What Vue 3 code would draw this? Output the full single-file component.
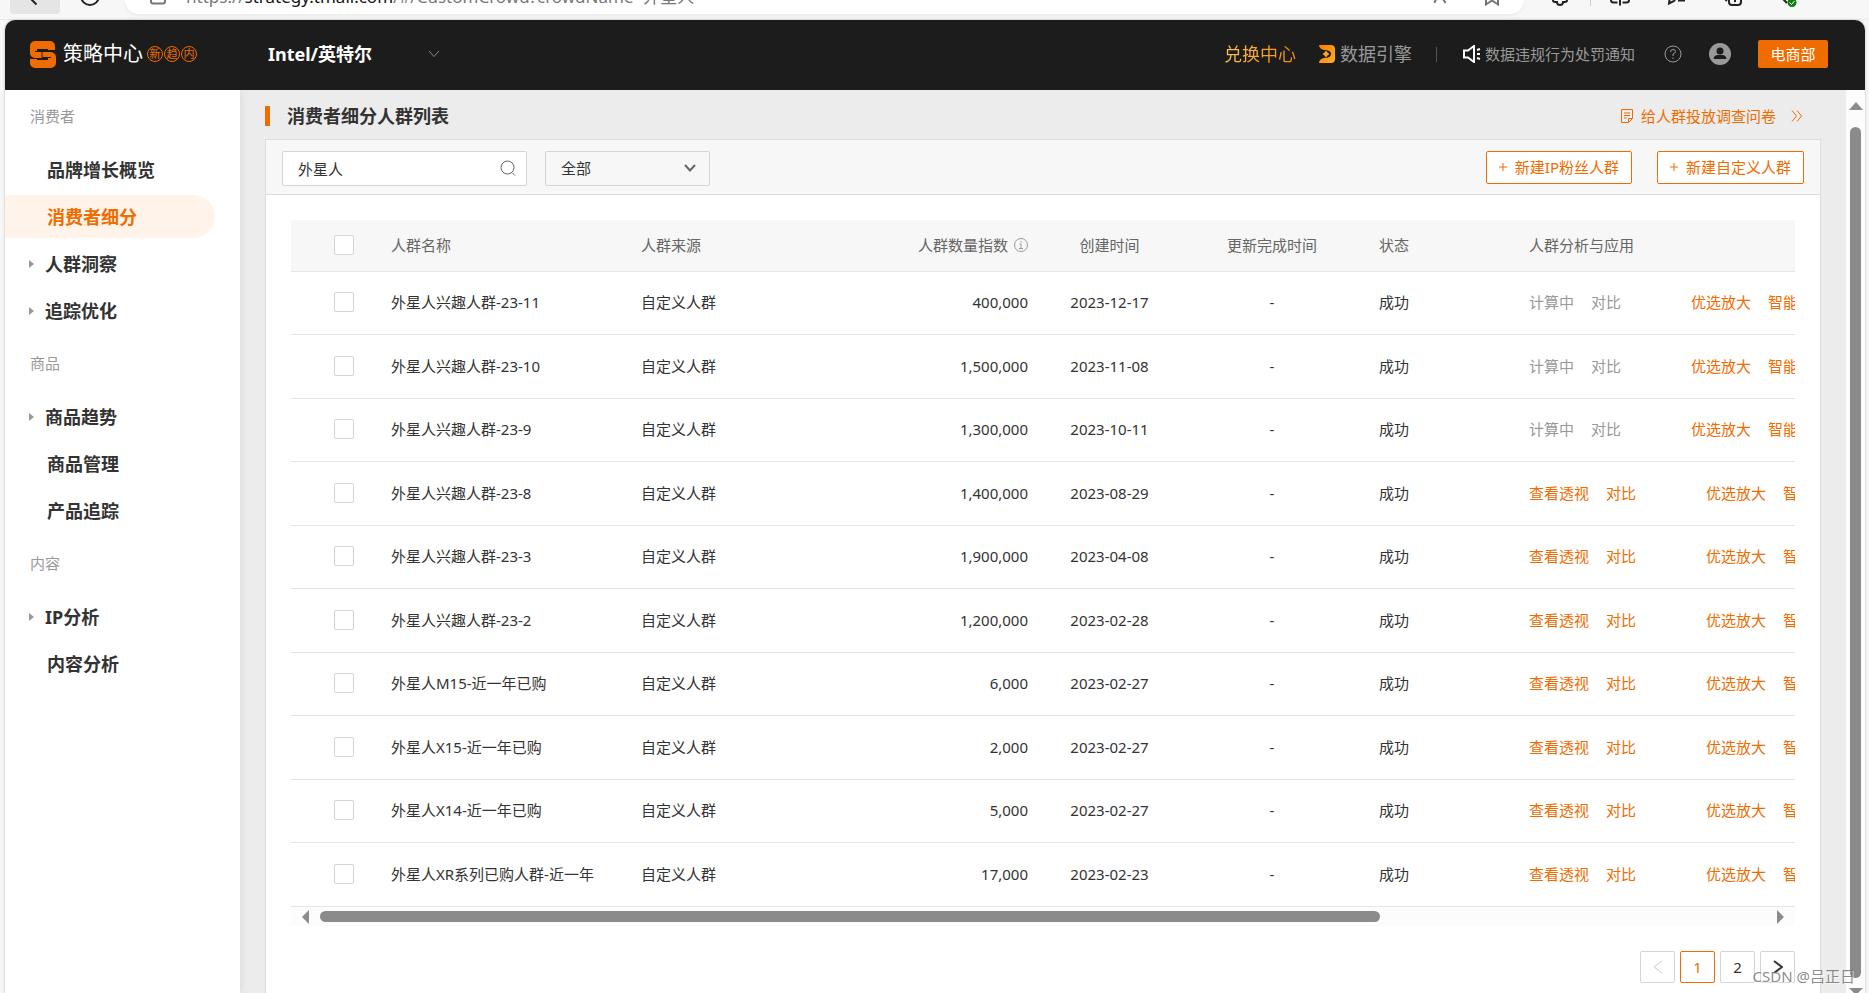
<script setup>
import { ref } from 'vue'

const keyword = ref('外星人')
const source = ref('全部')
const url = { scheme: 'https://', host: 'strategy.tmall.com', path: '/#/CustomCrowd?crowdName=外星人' }

const menu = [
  {
    title: '消费者',
    items: [
      { text: '品牌增长概览' },
      { text: '消费者细分', active: true },
      { text: '人群洞察', group: true },
      { text: '追踪优化', group: true },
    ],
  },
  {
    title: '商品',
    items: [{ text: '商品趋势', group: true }, { text: '商品管理' }, { text: '产品追踪' }],
  },
  {
    title: '内容',
    items: [{ text: 'IP分析', group: true }, { text: '内容分析' }],
  },
]

const rows = [
  { name: '外星人兴趣人群-23-11', count: '400,000', date: '2023-12-17', pending: true },
  { name: '外星人兴趣人群-23-10', count: '1,500,000', date: '2023-11-08', pending: true },
  { name: '外星人兴趣人群-23-9', count: '1,300,000', date: '2023-10-11', pending: true },
  { name: '外星人兴趣人群-23-8', count: '1,400,000', date: '2023-08-29' },
  { name: '外星人兴趣人群-23-3', count: '1,900,000', date: '2023-04-08' },
  { name: '外星人兴趣人群-23-2', count: '1,200,000', date: '2023-02-28' },
  { name: '外星人M15-近一年已购', count: '6,000', date: '2023-02-27' },
  { name: '外星人X15-近一年已购', count: '2,000', date: '2023-02-27' },
  { name: '外星人X14-近一年已购', count: '5,000', date: '2023-02-27' },
  { name: '外星人XR系列已购人群-近一年', count: '17,000', date: '2023-02-23' },
]
</script>

<template>
  <div class="shell">
    <div class="browser">
      <button class="nav back" aria-label="后退">
        <svg width="20" height="20" viewBox="0 0 20 20"><path d="M13-4 6 -1 11.500 4.500" /></svg>
      </button>
      <button class="nav" aria-label="刷新">
        <svg width="20" height="20" viewBox="0 0 20 20"><circle cx="10" cy="-4" r="9" /></svg>
      </button>
      <div class="address">
        <svg class="lock" width="16" height="20" viewBox="0 0 16 20"><rect x="1" y="-8" width="14" height="11.500" rx="2" /></svg>
        <div class="url"><span>{{ url.scheme }}</span><b>{{ url.host }}</b><span>{{ url.path }}</span></div>
        <svg class="soft" width="20" height="20" viewBox="0 0 20 20"><path d="M8-6 4.500 3M10-6 15.500 3" /></svg>
        <svg class="soft" width="20" height="20" viewBox="0 0 20 20"><path d="M4-6V4.500L10 0.500 16 4.500V-6" /></svg>
      </div>
      <div class="tools">
        <button class="nav puzzle" aria-label="扩展">
          <svg width="20" height="20" viewBox="0 0 20 20"><path d="M3-5V0Q3 2 5 2H7Q7 5 10 5 13 5 13 2H15Q17 2 17 0V-5" /></svg>
        </button>
        <i class="bar"></i>
        <button class="nav tool" aria-label="分屏">
          <svg width="20" height="20" viewBox="0 0 20 20"><path d="M1-5V0Q1 2.500 3.500 2.500H7.500M12.500 2.500H16.500Q19 2.500 19 0V-5M10-5V5.500" /></svg>
        </button>
        <button class="nav tool" aria-label="收藏夹">
          <svg width="20" height="20" viewBox="0 0 20 20"><path d="M3-4 2 3.500 7 1 9-2M11 .5H18" /></svg>
        </button>
        <button class="nav tool" aria-label="集锦">
          <svg width="20" height="20" viewBox="0 0 20 20"><path d="M5-5V2Q5 5 8 5H14Q17 5 17 2V-5M1-1 3 1M11-5V2" /></svg>
        </button>
        <button class="nav tool" aria-label="浏览器概要">
          <svg width="20" height="20" viewBox="0 0 20 20"><path d="M1-2 6 3" /><circle class="ok" cx="11" cy="2.500" r="4.500" /><path class="tick" d="M8.500 2.500 10.500 4.500 13.500 1" /></svg>
        </button>
      </div>
    </div>

    <div class="window">
      <header class="top">
        <svg class="logo" width="26" height="27" viewBox="0 0 26 27">
          <path d="M5 0H20A5 5 0 0 1 25 5V9H18V6H7V11H20A6 5 0 0 1 26 16V22A5 5 0 0 1 21 27H5A5 5 0 0 1 0 22V18H7V20H18V17H5A5 5 0 0 1 0 12V5A5 5 0 0 1 5 0Z" />
          <path d="M7 5H18V8H7ZM7 19H18V22H7Z" />
          <path class="cut" d="M5 10.500H17M12 11V16.500H21" />
        </svg>
        <span class="product">策略中心</span>
        <span class="seals"><i>新</i><i>趋</i><i>内</i></span>
        <button class="brand">
          <span>Intel/英特尔</span>
          <svg width="12" height="8" viewBox="0 0 12 8"><path d="M1 1 6 6.500 11 1" /></svg>
        </button>
        <nav class="links">
          <a class="exchange" href="#exchange">兑换中心</a>
          <a class="engine" href="#engine">
            <svg width="16" height="18" viewBox="0 0 16 18">
              <defs>
                <linearGradient id="engine" x1="0" y1="0" x2="1" y2="1"><stop offset="0" stop-color="#ff7a00" /><stop offset="1" stop-color="#ffb020" /></linearGradient>
              </defs>
              <path fill="url(#engine)" d="M0 0H12Q16 0 16 4V14Q16 18 12 18H0Q0 14 5 13 12 13 12 9 12 5 5 5 0 4 0 0Z" />
              <path fill="#ffa51f" d="M7 5.500 8.500 7.500 10.500 9 8.500 10.500 7 12.500 5.500 10.500 3.500 9 5.500 7.500Z" />
            </svg>
            数据引擎
          </a>
          <i class="split"></i>
          <a class="notice" href="#notice">
            <svg width="18" height="18" viewBox="0 0 18 18"><path d="M11 1V17L5 12.500H1V5.500H5ZM14 5 17 4M14 9H17M14 13 17 14" /></svg>
            数据违规行为处罚通知
          </a>
          <button class="round" aria-label="帮助">
            <svg width="18" height="18" viewBox="0 0 18 18"><circle cx="9" cy="9" r="8" /><path d="M6.500 7Q6.500 4.500 9 4.500 11.500 4.500 11.500 6.500 11.500 8 9 9V11M9 12.500V14" /></svg>
          </button>
          <button class="round user" aria-label="账户">
            <svg width="22" height="22" viewBox="0 0 22 22"><circle class="disc" cx="11" cy="11" r="11" /><circle class="hole" cx="11" cy="8" r="3.500" /><path class="hole" d="M4.500 16Q5 12 9 12H13Q17 12 17.500 16Z" /></svg>
          </button>
          <button class="dept">电商部</button>
        </nav>
      </header>

      <div class="body">
        <aside class="side">
          <section v-for="g in menu" :key="g.title" class="group">
            <h2>{{ g.title }}</h2>
            <a v-for="m in g.items" :key="m.text" href="#menu" :class="{ active: m.active, parent: m.group }">
              <svg v-if="m.group" width="5" height="8" viewBox="0 0 5 8"><path d="M0 0 5 4 0 8Z" /></svg>
              {{ m.text }}
            </a>
          </section>
        </aside>

        <main class="main">
          <div class="heading">
            <h1>消费者细分人群列表</h1>
            <a href="#survey">
              <svg width="12" height="14" viewBox="0 0 12 14"><path d="M7.500 13.500H.5V.5H11.500V9.500ZM7.500 13.500V9.500H11.500M3 4H9M3 6.500H9M3 9H5.500" /></svg>
              <span>给人群投放调查问卷</span>
              <svg width="12" height="12" viewBox="0 0 12 12"><path d="M1 .5 5.500 6 1 11.500M6 .5 10.500 6 6 11.500" /></svg>
            </a>
          </div>

          <section class="card">
            <div class="filters">
              <label class="search">
                <input v-model="keyword" type="text" aria-label="人群名称" />
                <svg width="16" height="16" viewBox="0 0 16 16"><circle cx="7.500" cy="7.500" r="6.500" /><path d="M12.500 13 15 15.500" /></svg>
              </label>
              <label class="pick">
                <select v-model="source" aria-label="人群来源"><option>全部</option></select>
                <svg width="12" height="8" viewBox="0 0 12 8"><path d="M1 1 6 6.500 11 1" /></svg>
              </label>
              <div class="actions">
                <button>
                  <svg width="8" height="8" viewBox="0 0 8 8"><path d="M4 0V8M0 4H8" /></svg>新建IP粉丝人群
                </button>
                <button>
                  <svg width="8" height="8" viewBox="0 0 8 8"><path d="M4 0V8M0 4H8" /></svg>新建自定义人群
                </button>
              </div>
            </div>

            <div class="list">
              <div class="viewport">
                <table>
                  <colgroup>
                    <col class="w-check" /><col class="w-name" /><col class="w-source" /><col class="w-count" />
                    <col class="w-date" /><col class="w-update" /><col class="w-status" /><col />
                  </colgroup>
                  <thead>
                    <tr>
                      <th class="check"><input type="checkbox" aria-label="全选" /></th>
                      <th>人群名称</th>
                      <th>人群来源</th>
                      <th class="num">
                        <span class="hint">人群数量指数
                          <svg width="14" height="14" viewBox="0 0 14 14"><circle cx="7" cy="7" r="6.500" /><path d="M7 3V4.500M5.500 6H7V10.500M5 10.500H9" /></svg>
                        </span>
                      </th>
                      <th class="mid">创建时间</th>
                      <th class="mid">更新完成时间</th>
                      <th class="status">状态</th>
                      <th>人群分析与应用</th>
                    </tr>
                  </thead>
                  <tbody>
                    <tr v-for="r in rows" :key="r.name">
                      <td class="check"><input type="checkbox" :aria-label="r.name" /></td>
                      <td>{{ r.name }}</td>
                      <td>自定义人群</td>
                      <td class="num">{{ r.count }}</td>
                      <td class="mid">{{ r.date }}</td>
                      <td class="mid">-</td>
                      <td class="status">成功</td>
                      <td>
                        <div class="ops">
                          <template v-if="r.pending">
                            <button disabled>计算中</button>
                            <button disabled>对比</button>
                          </template>
                          <template v-else>
                            <a href="#view">查看透视</a>
                            <a href="#compare">对比</a>
                          </template>
                          <a class="far" href="#expand">优选放大</a>
                          <a href="#smart">智能放大</a>
                        </div>
                      </td>
                    </tr>
                  </tbody>
                </table>
              </div>
              <div class="hscroll">
                <svg width="7" height="14" viewBox="0 0 7 14"><path d="M7 0V14L0 7Z" /></svg>
                <div class="rail"><div class="thumb"></div></div>
                <svg width="7" height="14" viewBox="0 0 7 14"><path d="M0 0V14L7 7Z" /></svg>
              </div>
              <nav class="pages" aria-label="分页">
                <button disabled aria-label="上一页"><svg width="10" height="14" viewBox="0 0 10 14"><path d="M9 1 1 7 9 13" /></svg></button>
                <button class="current">1</button>
                <button>2</button>
                <button class="next" aria-label="下一页"><svg width="10" height="14" viewBox="0 0 10 14"><path d="M1 1 9 7 1 13" /></svg></button>
              </nav>
            </div>
          </section>
        </main>

        <div class="vscroll">
          <svg width="14" height="8" viewBox="0 0 14 8"><path d="M7 0 14 8H0Z" /></svg>
          <div class="thumb"></div>
          <svg class="down" width="14" height="5" viewBox="0 0 14 5"><path d="M0 0H14L9 5H5Z" /></svg>
        </div>
      </div>
    </div>
    <div class="mark">CSDN @吕正日</div>
  </div>
</template>

<style>
body {
  background: #f7f7f7;
  overflow: hidden;
}
</style>

<style scoped>
* {
  box-sizing: border-box;
}
.shell {
  position: relative;
  display: flex;
  flex-direction: column;
  height: 100vh;
  overflow: hidden;
  font: 15px/20px "Noto Sans", "Noto Sans CJK SC", sans-serif;
  color: #333;
}
button,
input,
select {
  font: inherit;
  color: inherit;
  margin: 0;
  padding: 0;
  border: 0;
  background: none;
}
a {
  color: #ef6c00;
  text-decoration: none;
}
i {
  font-style: normal;
}
svg {
  display: block;
  flex: none;
  fill: none;
  stroke: currentColor;
}

/* browser toolbar */
.browser {
  display: flex;
  flex: none;
  height: 20px;
  overflow: hidden;
  border-bottom: 1px solid #ebebeb;
  color: #222;
}
.nav {
  display: flex;
  justify-content: center;
  height: 14px;
  width: 50px;
}
.nav svg,
.lock,
.soft {
  overflow: hidden;
  stroke-width: 2;
}
.nav:nth-child(2) {
  margin: 0 15px 0 5px;
}
.nav.back {
  margin-left: 10px;
  background: #e5e5e5;
  border-radius: 0 0 4px 4px;
}
.address {
  display: flex;
  flex: 1;
  height: 14px;
  margin-left: -5px;
  padding: 0 22px 0 25px;
  background: #fff;
  border-radius: 0 0 20px 20px;
  box-shadow: 0 2px 3px #ececec;
}
.lock,
.soft {
  color: #777;
}
.soft + .soft {
  margin-left: 32px;
}
.url {
  flex: 1;
  height: 7px;
  margin-left: 20px;
  display: flex;
  align-items: flex-end;
  overflow: hidden;
  font-size: 17px;
  line-height: 20px;
  color: #777;
  white-space: nowrap;
}
.url b {
  font-weight: 400;
  color: #111;
}
.tools {
  display: flex;
  width: 345px;
}
.nav.puzzle {
  width: 40px;
  margin-left: 16px;
}
.bar {
  width: 1px;
  height: 6px;
  margin-left: 10px;
  background: #ccc;
}
.nav.tool {
  width: 57px;
  margin: 0;
}
.ok {
  fill: #107c10;
  stroke: none;
}
.tick {
  stroke: #fff;
  stroke-width: 1;
}

/* page */
.window {
  display: flex;
  flex-direction: column;
  flex: 1;
  min-height: 0;
  margin: 0 4px 0 5px;
  border-radius: 10px 10px 0 0;
  overflow: hidden;
  box-shadow: 0 0 3px #bbb;
}
.top {
  position: relative;
  z-index: 1;
  display: flex;
  align-items: center;
  flex: none;
  height: 70px;
  padding: 0 37px 2px 25px;
  background: #1c1c1c;
  color: #999;
  white-space: nowrap;
}
.logo {
  fill: #ef6c00;
  stroke: none;
}
.logo .cut {
  fill: none;
  stroke: #1c1c1c;
  stroke-width: 1;
}
.product {
  margin-left: 7px;
  font-size: 20px;
  line-height: 28px;
  color: #fff;
}
.seals {
  display: flex;
  gap: 1px;
  margin-left: 4px;
}
.seals i {
  width: 16px;
  height: 16px;
  border: 1px solid #ef6c00;
  border-radius: 50%;
  color: #ef6c00;
  font-size: 11px;
  line-height: 14px;
  display: flex;
  justify-content: center;
}
.brand {
  display: flex;
  align-items: center;
  justify-content: space-between;
  width: 172px;
  margin-left: 71px;
  font-size: 18px;
  font-weight: 700;
  color: #fff;
}
.brand svg {
  color: #888;
}
.links {
  display: flex;
  align-items: center;
  margin-left: auto;
}
.links a {
  display: flex;
  align-items: center;
  gap: 5px;
  color: #999;
}
.links .exchange {
  font-size: 18px;
  background: linear-gradient(90deg, #f9c15c, #f78a00);
  background-clip: text;
  color: transparent;
}
.links .engine {
  margin-left: 23px;
  font-size: 18px;
}
.engine svg {
  stroke: none;
}
.split {
  width: 1px;
  height: 15px;
  margin: 0 26px 0 24px;
  background: #555;
}
.links .notice {
  gap: 4px;
}
.notice svg {
  color: #fff;
  stroke-width: 2;
}
.round {
  margin-left: 29px;
}
.round svg {
  stroke-width: 1;
}
.round.user {
  margin-left: 27px;
}
.disc {
  fill: #999;
  stroke: none;
}
.hole {
  fill: #1c1c1c;
  stroke: none;
}
.dept {
  width: 70px;
  height: 28px;
  margin-left: 27px;
  border-radius: 2px;
  background: #ef6c00;
  color: #fff;
}
.body {
  display: flex;
  flex: 1;
  min-height: 0;
  background: #ececec;
}

/* side menu */
.side {
  flex: none;
  width: 235px;
  padding-top: 15px;
  background: #fff;
  box-shadow: 0 0 8px #d5d5d5;
}
.group + .group {
  margin-top: 20px;
}
.group h2 {
  margin: 0 0 20px 25px;
  font-size: 15px;
  line-height: 23px;
  font-weight: 400;
  color: #999;
}
.group a {
  display: flex;
  align-items: center;
  height: 43px;
  width: 210px;
  margin: 4px 0;
  padding-left: 42px;
  border-radius: 0 22px 22px 0;
  color: #333;
  font-size: 18px;
  font-weight: 700;
}
.group a.active {
  background: #fff3ea;
  color: #ef6c00;
}
.group a.parent {
  gap: 11px;
  padding-left: 24px;
}
.group svg {
  fill: #999;
  stroke: none;
}

/* content */
.main {
  flex: 1;
  min-width: 0;
  padding: 0 25px;
  display: flex;
  flex-direction: column;
}
.heading {
  display: flex;
  align-items: center;
  justify-content: space-between;
  height: 49px;
  padding: 3px 18px 0 0;
}
.heading h1 {
  margin: 0;
  padding-left: 17px;
  border-left: 5px solid #ef6c00;
  font-size: 18px;
  line-height: 20px;
}
.heading a {
  display: flex;
  align-items: center;
  gap: 8px;
}
.heading a span {
  margin-right: 7px;
}
.card {
  flex: 1;
  border: 1px solid #dcdde2;
  border-bottom: 0;
  background: #fff;
}
.filters {
  display: flex;
  align-items: center;
  height: 55px;
  padding: 0 16px;
  border-bottom: 1px solid #dcdde2;
  background: #f7f7f7;
}
.search,
.pick {
  display: flex;
  align-items: center;
  height: 35px;
  margin-top: 2px;
  border: 1px solid #d5d5d5;
  border-radius: 2px;
  color: #666;
}
.search {
  width: 245px;
  padding: 0 10px 0 15px;
  background: #fff;
}
.search input,
.pick select {
  flex: 1;
  min-width: 0;
  height: 33px;
  appearance: none;
  outline: none;
  color: #333;
}
.pick {
  width: 165px;
  margin-left: 18px;
  padding: 0 13px 0 15px;
}
.pick svg {
  stroke-width: 2;
}
.actions {
  display: flex;
  gap: 25px;
  margin-left: auto;
}
.actions button {
  display: flex;
  align-items: center;
  gap: 8px;
  height: 33px;
  padding: 0 12px;
  border: 1px solid #ef6c00;
  border-radius: 2px;
  background: #fff;
  color: #ef6c00;
}
.list {
  padding: 25px 25px 10px;
}
.viewport {
  overflow: hidden;
}
table {
  width: 2068px;
  table-layout: fixed;
  border-collapse: separate;
  border-spacing: 0;
}
.w-check {
  width: 84px;
}
.w-name {
  width: 250px;
}
.w-source {
  width: 231px;
}
.w-count {
  width: 188px;
}
.w-date {
  width: 131px;
}
.w-update {
  width: 194px;
}
.w-status {
  width: 144px;
}
th,
td {
  height: 63px;
  padding: 0 16px 2px;
  border-bottom: 1px solid #e5e5e5;
  text-align: left;
  white-space: nowrap;
}
tr:nth-child(even) td {
  height: 64px;
}
th {
  height: 52px;
  background: #f7f7f7;
  font-weight: 400;
  color: #666;
}
.check {
  padding: 0 0 2px 43px;
}
.check input {
  display: block;
  width: 20px;
  height: 20px;
  appearance: none;
  border: 1px solid #d5d5d5;
  border-radius: 2px;
  background: #fff;
}
.num {
  text-align: right;
}
.mid {
  text-align: center;
  padding: 0 0 2px;
}
.status {
  padding-left: 10px;
}
.hint {
  display: flex;
  align-items: center;
  justify-content: flex-end;
  gap: 6px;
}
.hint svg {
  color: #999;
}
.ops {
  display: flex;
  gap: 17px;
}
.ops button {
  color: #999;
}
.ops .far {
  margin-left: 53px;
}
.hscroll {
  display: flex;
  align-items: center;
  gap: 11px;
  height: 19px;
  padding: 0 11px;
  background: #fcfcfc;
}
.hscroll svg,
.vscroll svg {
  fill: #8b8b8b;
  stroke: none;
}
.rail {
  flex: 1;
}
.rail .thumb {
  width: calc(100% * 11 / 15);
  height: 11px;
}
.thumb {
  border-radius: 6px;
  background: #8b8b8b;
}
.pages {
  display: flex;
  justify-content: flex-end;
  gap: 5px;
  margin-top: 25px;
}
.pages button {
  display: flex;
  align-items: center;
  justify-content: center;
  width: 35px;
  height: 32px;
  border: 1px solid #d5d5d5;
  border-radius: 2px;
}
.pages button:disabled {
  color: #ccc;
}
.pages .next svg {
  stroke-width: 2;
}
.pages .current {
  border-color: #ef6c00;
  color: #ef6c00;
}
.vscroll {
  display: flex;
  flex-direction: column;
  align-items: center;
  flex: none;
  width: 19px;
  padding-top: 12px;
  background: #fcfcfc;
}
.vscroll .thumb {
  flex: 1;
  width: 11px;
  margin: 17px 0 10px;
}
.mark {
  position: absolute;
  right: 14px;
  bottom: 7px;
  color: rgba(110, 110, 110, 0.8);
  text-shadow: 1px 1px 0 rgba(255, 255, 255, 0.6);
}
</style>
